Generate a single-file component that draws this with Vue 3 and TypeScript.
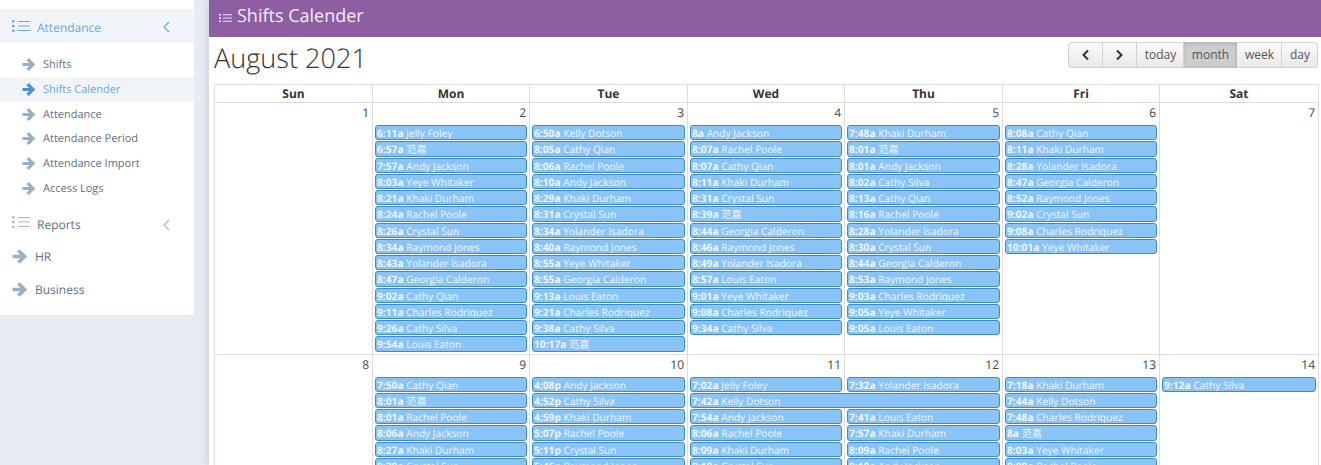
<script setup lang="ts">
interface Ev { id: string; time: string; name: string; col: number; row: number; span: number }

const subItems = ['Shifts', 'Shifts Calender', 'Attendance', 'Attendance Period', 'Attendance Import', 'Access Logs']
const days = ['Sun', 'Mon', 'Tue', 'Wed', 'Thu', 'Fri', 'Sat']

function build(cols: string[][]): Ev[] {
  const out: Ev[] = []
  cols.forEach((list, c) => {
    list.forEach((s, r) => {
      if (!s) return
      const [time, name, span] = s.split('|')
      out.push({ id: `${c}-${r}`, time, name, col: c + 1, row: r + 2, span: span ? Number(span) : 1 })
    })
  })
  return out
}

const week1 = build([
  [],
  ['6:11a|Jelly Foley', '6:57a|范嘉', '7:57a|Andy Jackson', '8:03a|Yeye Whitaker', '8:21a|Khaki Durham', '8:24a|Rachel Poole', '8:26a|Crystal Sun', '8:34a|Raymond Jones', '8:43a|Yolander Isadora', '8:47a|Georgia Calderon', '9:02a|Cathy Qian', '9:11a|Charles Rodriquez', '9:26a|Cathy Silva', '9:54a|Louis Eaton'],
  ['6:50a|Kelly Dotson', '8:05a|Cathy Qian', '8:06a|Rachel Poole', '8:10a|Andy Jackson', '8:29a|Khaki Durham', '8:31a|Crystal Sun', '8:34a|Yolander Isadora', '8:40a|Raymond Jones', '8:55a|Yeye Whitaker', '8:55a|Georgia Calderon', '9:13a|Louis Eaton', '9:21a|Charles Rodriquez', '9:38a|Cathy Silva', '10:17a|范嘉'],
  ['8a|Andy Jackson', '8:07a|Rachel Poole', '8:07a|Cathy Qian', '8:11a|Khaki Durham', '8:31a|Crystal Sun', '8:39a|范嘉', '8:44a|Georgia Calderon', '8:46a|Raymond Jones', '8:49a|Yolander Isadora', '8:57a|Louis Eaton', '9:01a|Yeye Whitaker', '9:08a|Charles Rodriquez', '9:34a|Cathy Silva'],
  ['7:48a|Khaki Durham', '8:01a|范嘉', '8:01a|Andy Jackson', '8:02a|Cathy Silva', '8:13a|Cathy Qian', '8:16a|Rachel Poole', '8:28a|Yolander Isadora', '8:30a|Crystal Sun', '8:44a|Georgia Calderon', '8:53a|Raymond Jones', '9:03a|Charles Rodriquez', '9:05a|Yeye Whitaker', '9:05a|Louis Eaton'],
  ['8:08a|Cathy Qian', '8:11a|Khaki Durham', '8:28a|Yolander Isadora', '8:47a|Georgia Calderon', '8:52a|Raymond Jones', '9:02a|Crystal Sun', '9:08a|Charles Rodriquez', '10:01a|Yeye Whitaker'],
  [],
])

const week2 = build([
  [],
  ['7:50a|Cathy Qian', '8:01a|范嘉', '8:01a|Rachel Poole', '8:06a|Andy Jackson', '8:27a|Khaki Durham', '8:29a|Crystal Sun'],
  ['4:08p|Andy Jackson', '4:52p|Cathy Silva', '4:59p|Khaki Durham', '5:07p|Rachel Poole', '5:11p|Crystal Sun', '5:46p|Raymond Jones'],
  ['7:02a|Jelly Foley', '7:42a|Kelly Dotson|2', '7:54a|Andy Jackson', '8:06a|Rachel Poole', '8:09a|Khaki Durham', '8:18a|Crystal Sun'],
  ['7:32a|Yolander Isadora', '', '7:41a|Louis Eaton', '7:57a|Khaki Durham', '8:09a|Rachel Poole', '8:10a|Andy Jackson'],
  ['7:18a|Khaki Durham', '7:44a|Kelly Dotson', '7:48a|Charles Rodriquez', '8a|范嘉', '8:03a|Yeye Whitaker', '8:09a|Rachel Poole'],
  ['9:12a|Cathy Silva'],
])

const weeks = [
  { nums: [1, 2, 3, 4, 5, 6, 7], events: week1 },
  { nums: [8, 9, 10, 11, 12, 13, 14], events: week2 },
]
</script>

<template>
  <div class="app">
    <aside class="sidebar">
      <div class="nav-row open">
        <svg class="list-ic" viewBox="0 0 18 14"><g fill="none" stroke="currentColor" stroke-width="1"><path d="M6 2.5h12M6 7h12M6 11.5h12"/></g><g fill="currentColor"><rect x="0" y="1" width="2.6" height="2.6" rx="1"/><rect x="0" y="5.7" width="2.6" height="2.6" rx="1"/><rect x="0" y="10.4" width="2.6" height="2.6" rx="1"/></g></svg>
        <span class="nav-label">Attendance</span>
        <svg class="chev" viewBox="0 0 7 12"><path d="M6 1 1 6l5 5" fill="none" stroke="currentColor" stroke-width="1.1"/></svg>
      </div>
      <ul class="sub">
        <li v-for="(s, i) in subItems" :key="s" class="sub-item" :class="{ active: i === 1 }">
          <svg class="arrow" viewBox="0 0 14 13"><path d="M0.5 6.5h10.5M5.6 1.2l5.4 5.3-5.4 5.3" fill="none" stroke="currentColor" stroke-width="3.2"/></svg>
          <span>{{ s }}</span>
        </li>
      </ul>
      <div class="nav-row reports">
        <svg class="list-ic" viewBox="0 0 18 14"><g fill="none" stroke="currentColor" stroke-width="1"><path d="M6 2.5h12M6 7h12M6 11.5h12"/></g><g fill="currentColor"><rect x="0" y="1" width="2.6" height="2.6" rx="1"/><rect x="0" y="5.7" width="2.6" height="2.6" rx="1"/><rect x="0" y="10.4" width="2.6" height="2.6" rx="1"/></g></svg>
        <span class="nav-label">Reports</span>
        <svg class="chev" viewBox="0 0 7 12"><path d="M6 1 1 6l5 5" fill="none" stroke="currentColor" stroke-width="1.1"/></svg>
      </div>
      <div v-for="t in ['HR', 'Business']" :key="t" class="nav-row plain">
        <svg class="arrow big" viewBox="0 0 14 13"><path d="M0.5 6.5h10.5M5.6 1.2l5.4 5.3-5.4 5.3" fill="none" stroke="currentColor" stroke-width="3.2"/></svg>
        <span class="plain-label">{{ t }}</span>
      </div>
    </aside>

    <main class="main">
      <header class="top">
        <svg class="top-ic" viewBox="0 0 14 10"><g fill="none" stroke="currentColor" stroke-width="1"><path d="M4 1.5h10M4 5h10M4 8.5h10"/></g><g fill="currentColor"><rect x="0" y="0.6" width="2" height="1.8"/><rect x="0" y="4.1" width="2" height="1.8"/><rect x="0" y="7.6" width="2" height="1.8"/></g></svg>
        <span>Shifts Calender</span>
      </header>
      <section class="content">
        <div class="toolbar">
          <h2 class="title">August 2021</h2>
          <div class="btns">
            <button class="btn ic"><svg viewBox="0 0 9 12"><path d="M7 1.5 2.5 6 7 10.5" fill="none" stroke="currentColor" stroke-width="2"/></svg></button>
            <button class="btn ic"><svg viewBox="0 0 9 12"><path d="M2 1.5 6.5 6 2 10.5" fill="none" stroke="currentColor" stroke-width="2"/></svg></button>
            <button class="btn b-today">today</button>
            <button class="btn b-month on">month</button>
            <button class="btn b-week">week</button>
            <button class="btn b-day">day</button>
          </div>
        </div>
        <div class="cal">
          <div class="dow">
            <div v-for="d in days" :key="d" class="dow-cell">{{ d }}</div>
          </div>
          <div v-for="(w, wi) in weeks" :key="wi" class="wk">
            <div
              v-for="(n, i) in w.nums"
              :key="n"
              class="cell"
              :style="{ gridColumn: i + 1 }"
            >{{ n }}</div>
            <div
              v-for="e in w.events"
              :key="e.id"
              class="event"
              :style="{ gridColumn: `${e.col} / span ${e.span}`, gridRow: e.row }"
            ><b>{{ e.time }}</b> {{ e.name }}</div>
          </div>
        </div>
      </section>
    </main>
  </div>
</template>

<style>
html, body { margin: 0; overflow: hidden; height: 465px; background: #e8ebf4; }
</style>

<style scoped>
.app {
  display: flex;
  align-items: flex-start;
  height: 465px;
  overflow: hidden;
  background: #e8ebf4;
  font-family: "Open Sans", "Noto Sans CJK SC", sans-serif;
  text-rendering: geometricPrecision;
  opacity: 0.999;
}
.sidebar {
  width: 194px;
  flex: none;
  background: #fff;
  padding: 9px 0 9px;
  border-radius: 0 0 4px 0;
  box-sizing: border-box;
  height: 315px;
}
.nav-row {
  display: flex;
  align-items: center;
  height: 33px;
  color: #5f6f81;
  font-size: 12px;
}
.nav-row.open {
  height: 34px;
  background: #f1f4f8;
  color: #6aa6db;
  padding-top: 2px;
  box-sizing: border-box;
}
.nav-row.reports { margin-top: 6px; padding-top: 2px; box-sizing: border-box; }
.list-ic { width: 18px; height: 14px; margin-left: 12px; flex: none; }
.nav-row.open .list-ic { margin-top: -3px; }
.nav-row.reports .list-ic { color: #a9b7c6; margin-top: -5px; }
.nav-label { margin-left: 7px; flex: 1; }
.chev { width: 7px; height: 12px; margin-right: 24px; flex: none; }
.nav-row.reports .chev { color: #a9b7c6; }
.sub { list-style: none; margin: 9px 0 0; padding: 0; }
.sub-item {
  display: flex;
  align-items: center;
  height: 24.85px;
  padding-left: 22px;
  font-size: 11px;
  color: #5f6f81;
}
.sub-item.active { background: #f1f4f8; color: #6aa6db; }
.arrow { width: 14px; height: 13px; color: #98b0c6; flex: none; margin-right: 7px; }
.sub-item.active .arrow { color: #4a93d3; }
.arrow.big { width: 16px; height: 15px; margin-left: 12px; margin-right: 7px; }
.plain-label { font-size: 12px; }

.main {
  flex: none;
  margin-left: 15px;
  width: 1112px;
  height: 465px;
  background: #fff;
  box-shadow: -3px 0 6px rgba(60, 70, 100, 0.12);
  overflow: hidden;
}
.top {
  height: 37px;
  background: #8e5ea2;
  color: #f2ecf5;
  display: flex;
  align-items: center;
  padding: 0 0 5px 10px;
  font-size: 18px;
  box-sizing: border-box;
}
.top-ic { width: 13px; height: 10px; margin-right: 5px; flex: none; margin-top: 3px; }
.content { padding: 0 2px 0 5px; }
.toolbar {
  display: flex;
  justify-content: space-between;
  align-items: flex-start;
  height: 47px;
}
.title {
  margin: 0;
  font-size: 27.1px;
  font-weight: 300;
  line-height: 42px;
  color: #333;
}
.btns { display: flex; margin-top: 5px; margin-right: 1px; }
.btn {
  height: 26px;
  box-sizing: border-box;
  padding: 0 0 2px 1px;
  font: 12px "Open Sans", sans-serif;
  color: #555;
  background: linear-gradient(#fbfbfb, #e8e8e8);
  border: 1px solid #d2d2d2;
  border-left-width: 0;
  display: flex;
  align-items: center;
  justify-content: center;
}
.btn.ic { width: 34px; color: #333; padding: 0; }
.btn.ic:first-child { width: 35px; border-left-width: 1px; border-radius: 4px 0 0 4px; }
.btn.ic svg { width: 9px; height: 12px; }
.b-today { width: 47px; }
.b-month { width: 53px; }
.b-week { width: 45px; }
.b-day { width: 36px; border-radius: 0 4px 4px 0; }
.btn.on {
  background: #cdcdcd;
  border-color: #bdbdbd;
  box-shadow: inset 0 1px 3px rgba(0, 0, 0, 0.15);
}
.cal {
  border-top: 1px solid #ddd;
  border-right: 1px solid #ddd;
}
.dow, .wk {
  display: grid;
  grid-template-columns: 158px 157px 158px 157px 158px 157px 159px;
}
.dow-cell {
  border-left: 1px solid #ddd;
  border-bottom: 1px solid #ddd;
  height: 17px;
  line-height: 17px;
  text-align: center;
  font-size: 12px;
  font-weight: 700;
  color: #333;
}
.wk {
  grid-template-rows: 22px repeat(14, 16.25px) 2px;
  position: relative;
}
.cell {
  grid-row: 1 / -1;
  border-left: 1px solid #ddd;
  border-bottom: 1px solid #ddd;
  text-align: right;
  font-size: 12px;
  line-height: 16px;
  padding: 2px 3px 0 0;
  color: #444;
}
.event {
  z-index: 1;
  margin: 0 2px 0 3px;
  height: 15.25px;
  box-sizing: border-box;
  background: #8ac3f5;
  border: 1px solid #3c8dbc;
  border-radius: 3px;
  color: #eef6fd;
  font-size: 10.2px;
  line-height: 14.5px;
  padding-left: 1px;
  white-space: nowrap;
  overflow: hidden;
}
</style>
